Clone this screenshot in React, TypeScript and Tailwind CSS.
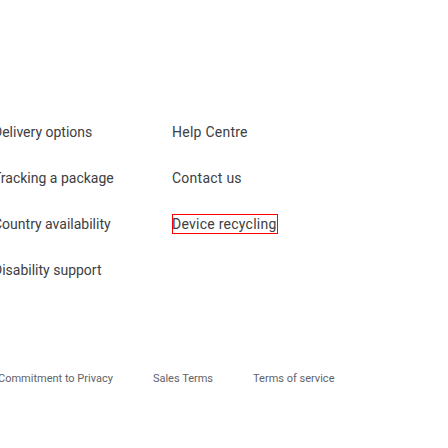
export default function App() {
  const left = ["Delivery options", "Tracking a package", "Country availability", "Disability support"];
  const right = ["Help Centre", "Contact us", "Device recycling"];

  return (
    <div className="w-[448px] h-[448px] overflow-hidden bg-white font-['Roboto',sans-serif]">
      <div className="ml-[-7px] pt-[122px] flex">
        <ul className="w-[179px] flex flex-col gap-[26px]">
          {left.map((t) => (
            <li key={t} className="h-5">
              <a className="block leading-5 text-[14px] text-[#3c4043]">{t}</a>
            </li>
          ))}
        </ul>
        <ul className="flex flex-col gap-[26px]">
          {right.map((t) => (
            <li key={t} className="h-5">
              <a
                className={
                  t === "Device recycling"
                    ? "block w-fit leading-5 text-[14px] tracking-[0.25px] text-[#3c4043] outline outline-1 outline-[#ff0000] -outline-offset-1 pr-px"
                    : "block w-fit leading-5 text-[14px] tracking-[0.25px] text-[#3c4043]"
                }
              >
                {t}
              </a>
            </li>
          ))}
        </ul>
      </div>
      <div className="ml-[-2px] mt-[91px] flex gap-10 text-[11px] leading-4 text-[#5f6368]">
        <a>Commitment to Privacy</a>
        <a>Sales Terms</a>
        <a>Terms of service</a>
      </div>
    </div>
  );
}
